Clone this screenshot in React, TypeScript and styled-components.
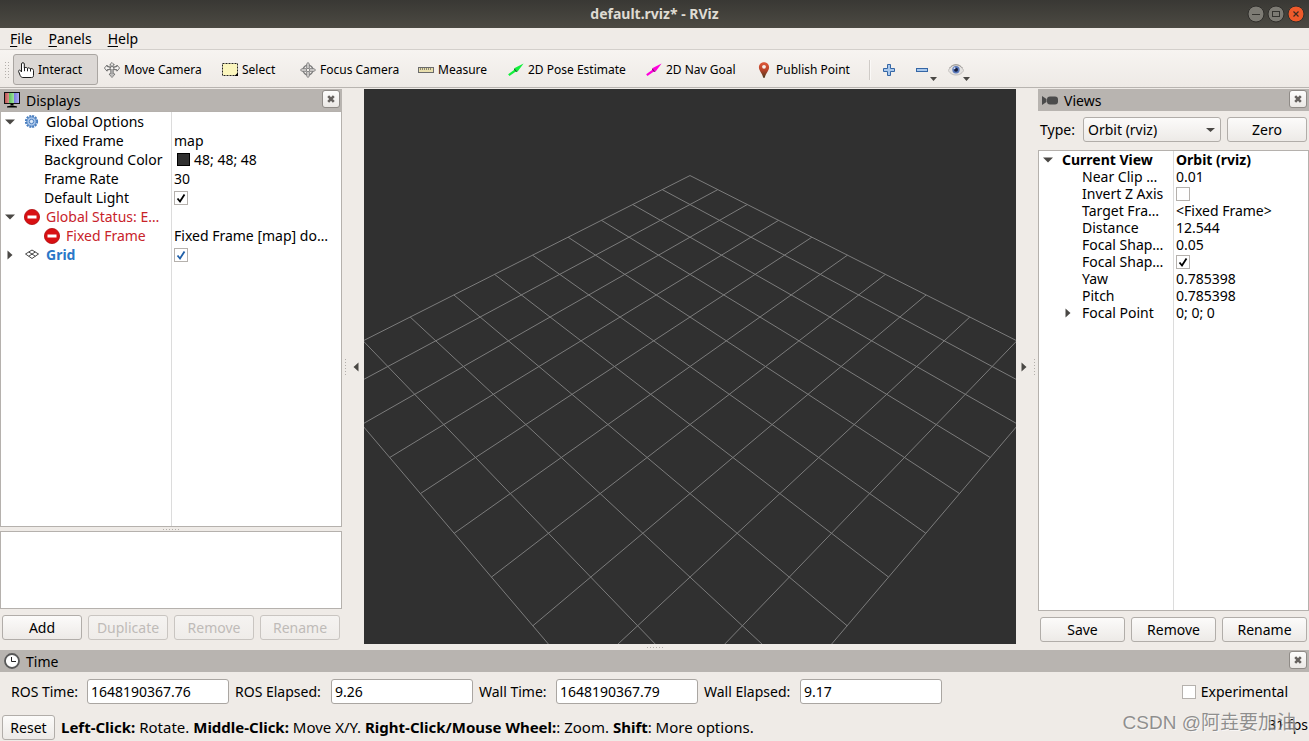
import React from "react";
import styled, { createGlobalStyle } from "styled-components";

const GlobalStyle = createGlobalStyle`
  *, *::before, *::after { box-sizing: border-box; }
  html, body { margin: 0; padding: 0; height: 100%; }
  body { overflow: hidden; }
  #root { height: 100%; }
  body, button, input, select {
    font-family: "Noto Sans", "Open Sans", "Noto Sans CJK SC", sans-serif;
    font-size: 14px;
    color: #000;
  }
`;

/* ---------- window ---------- */

const Window = styled.div`
  display: flex;
  flex-direction: column;
  height: 100vh;
  background: #efebe7;
`;

const TitleBar = styled.header`
  position: relative;
  display: flex;
  align-items: center;
  justify-content: center;
  height: 28px;
  flex: none;
  background: linear-gradient(#393834, #4c4a43);
`;

const Title = styled.h1`
  margin: 0;
  font-size: 14px;
  line-height: 28px;
  font-weight: 700;
  color: #dfdbd2;
`;

const WindowButtons = styled.div`
  position: absolute;
  top: 5px;
  right: 4px;
  display: flex;
  gap: 2px;
`;

const WindowButton = styled.button`
  width: 18px;
  height: 18px;
  padding: 0;
  border: 0;
  background: none;
  svg { display: block; }
`;

const MenuBar = styled.nav`
  display: flex;
  flex: none;
  height: 22px;
  padding-left: 5px;
  gap: 6px;
  border-bottom: 1px solid #d3cfcb;
`;

const MenuItem = styled.button`
  padding: 0 5px;
  border: 0;
  background: none;
  line-height: 21px;
  span { text-decoration: underline; text-underline-offset: 2px; text-decoration-thickness: 1px; }
`;

const ToolBar = styled.div`
  display: flex;
  flex: none;
  align-items: center;
  gap: 1px;
  height: 38px;
  padding: 2px 0 0 5px;
  margin-bottom: 1px;
  background: linear-gradient(#f7f4f1, #eeeae6);
  border-bottom: 1px solid #b8b4b0;
`;

const ToolBarHandle = styled.span`
  display: flex;
  flex: none;
  gap: 2px;
  width: 7px;
`;

const ToolButton = styled.button<{ $width: number; $active?: boolean }>`
  display: flex;
  align-items: center;
  gap: 4px;
  flex: none;
  width: ${(p) => p.$width}px;
  height: 31px;
  padding: 0 0 0 ${(p) => (p.$active ? 4 : 5)}px;
  border: ${(p) => (p.$active ? "1px solid #aaa6a2" : "0")};
  border-radius: 3px;
  background: ${(p) => (p.$active ? "#dcd8d5" : "none")};
  font-size: 12px;
  white-space: nowrap;
  svg { flex: none; }
`;

const ToolSeparator = styled.span`
  width: 2px;
  height: 20px;
  margin: 0 7px 0 5px;
  border-left: 1px solid #cfcbc7;
  border-right: 1px solid #fbf9f7;
`;

const IconButton = styled.button<{ $width: number }>`
  position: relative;
  width: ${(p) => p.$width}px;
  height: 31px;
  padding: 0 0 0 3px;
  border: 0;
  background: none;
  text-align: left;
  svg { display: block; }
`;

const MenuMark = styled.span`
  position: absolute;
  right: 7px;
  bottom: 4px;
`;

/* ---------- docks ---------- */

const Main = styled.main`
  display: grid;
  grid-template-columns: 342px 22px minmax(0, 1fr) 22px 271px;
  flex: 1;
  min-height: 0;
`;

const Dock = styled.section`
  display: flex;
  flex-direction: column;
  min-height: 0;
`;

const DockHeader = styled.div`
  display: flex;
  align-items: center;
  flex: none;
  gap: 6px;
  height: 22px;
  padding: 0 2px 0 4px;
  background: #b8b4b0;
  h2 { flex: 1; margin: 0; padding-top: 2px; font-size: 14px; line-height: 20px; font-weight: 400; }
  svg { display: block; }
`;

const CloseButton = styled.button`
  display: flex;
  align-items: center;
  justify-content: center;
  width: 18px;
  height: 18px;
  margin-bottom: 2px;
  padding: 0;
  border: 1px solid #8f8b87;
  border-radius: 3px;
  background: linear-gradient(#fdfdfc, #ebe8e5);
`;

const TreeBox = styled.div<{ $split: number }>`
  flex: 1;
  min-height: 0;
  border: 1px solid #b5b1ad;
  background: linear-gradient(#dcdcdc, #dcdcdc) ${(p) => p.$split}px 0 / 1px 100% no-repeat #fff;
`;

const Tree = styled.table<{ $row: number; $split: number }>`
  width: 100%;
  table-layout: fixed;
  border-collapse: collapse;
  td {
    height: ${(p) => p.$row}px;
    padding: 0 0 0 2px;
    line-height: ${(p) => p.$row}px;
    white-space: nowrap;
  }
  td:first-child { width: ${(p) => p.$split}px; padding: 0; }
`;

const Name = styled.div<{ $level: number; $tone?: string; $bold?: boolean }>`
  display: flex;
  align-items: center;
  padding-left: ${(p) => p.$level * 20}px;
  color: ${(p) => p.$tone ?? "#000"};
  font-weight: ${(p) => (p.$bold ? 700 : 400)};
  svg { flex: none; display: block; }
`;

const Branch = styled.span`
  flex: none;
  width: 23px;
  padding-left: 4px;
`;

const NameText = styled.span<{ $icon?: boolean }>`
  margin-left: ${(p) => (p.$icon ? 6 : 0)}px;
`;

const Value = styled.div<{ $bold?: boolean }>`
  display: flex;
  align-items: center;
  gap: 4px;
  font-weight: ${(p) => (p.$bold ? 700 : 400)};
`;

const Swatch = styled.i`
  width: 13px;
  height: 13px;
  margin-left: 3px;
  border: 1px solid #000;
  background: #303030;
`;

const CheckWrap = styled.span`
  position: relative;
  display: block;
  width: 14px;
  height: 14px;
  svg { position: absolute; left: 0; top: 0; pointer-events: none; }
`;

const CheckInput = styled.input`
  appearance: none;
  display: block;
  width: 14px;
  height: 14px;
  margin: 0;
  border: 1px solid #b5b1ad;
  background: #fff;
`;

const Description = styled.div`
  flex: none;
  height: 78px;
  border: 1px solid #b5b1ad;
  background: #fff;
`;

const ButtonRow = styled.div<{ $bottom: number }>`
  display: flex;
  flex: none;
  gap: 6px;
  padding: 6px 2px ${(p) => p.$bottom}px;
`;

const PushButton = styled.button<{ $width?: number }>`
  flex: ${(p) => (p.$width ? "none" : "1 1 0")};
  width: ${(p) => (p.$width ? `${p.$width}px` : "auto")};
  height: 25px;
  padding: 0;
  border: 1px solid #b1ada9;
  border-radius: 3px;
  background: linear-gradient(#fcfbfa, #edeae7);
  line-height: 23px;
  &:disabled { color: #bfbbb8; border-color: #c9c5c1; background: linear-gradient(#f5f3f1, #efece9); }
`;

const HandleDots = styled.span<{ $vertical?: boolean }>`
  display: block;
  width: ${(p) => (p.$vertical ? 1 : 16)}px;
  height: ${(p) => (p.$vertical ? 16 : 1)}px;
  background: repeating-linear-gradient(${(p) => (p.$vertical ? "180deg" : "90deg")}, #b3afab 0 1px, transparent 1px 3px);
`;

const Splitter = styled.div<{ $height: number }>`
  display: flex;
  flex: none;
  justify-content: center;
  align-items: center;
  height: ${(p) => p.$height}px;
`;

const Gutter = styled.div`
  display: flex;
  align-items: center;
  justify-content: space-between;
  padding: 0 3px;
`;

const Collapse = styled.button`
  display: flex;
  justify-content: center;
  align-items: center;
  width: 10px;
  height: 40px;
  padding: 0;
  border: 0;
  background: none;
`;

const Viewport = styled.div`
  min-width: 0;
  min-height: 0;
  background: #303030;
  overflow: hidden;
  svg { display: block; width: 100%; height: 100%; }
`;

const TypeRow = styled.div`
  display: flex;
  flex: none;
  align-items: center;
  gap: 6px;
  padding: 6px 2px 8px;
  label { width: 37px; }
`;

const SelectWrap = styled.div`
  position: relative;
  flex: 1;
  svg { position: absolute; right: 6px; top: 11px; pointer-events: none; }
`;

const Select = styled.select`
  appearance: none;
  display: block;
  width: 100%;
  height: 25px;
  padding: 0 20px 0 4px;
  border: 1px solid #b1ada9;
  border-radius: 3px;
  background: linear-gradient(#fcfbfa, #edeae7);
`;

/* ---------- time and status ---------- */

const TimeRow = styled.div`
  display: flex;
  flex: none;
  align-items: center;
  gap: 6px;
  padding: 7px 21px 11px 11px;
`;

const FieldLabel = styled.label<{ $width: number }>`
  flex: none;
  width: ${(p) => p.$width}px;
  white-space: nowrap;
`;

const Field = styled.input`
  width: 142px;
  height: 25px;
  padding: 0 3px;
  border: 1px solid #aaa6a2;
  border-radius: 3px;
  background: #fff;
`;

const Experimental = styled.label`
  display: flex;
  align-items: center;
  gap: 5px;
  margin-left: auto;
`;

const StatusBar = styled.footer`
  position: relative;
  display: flex;
  flex: none;
  align-items: center;
  gap: 6px;
  height: 26px;
  padding: 0 1px 2px 2px;
  p { flex: 1; margin: 0; font-size: 15px; line-height: 24px; white-space: nowrap; }
`;

const Fps = styled.span`
  padding-bottom: 4px;
  line-height: 20px;
`;

const Watermark = styled.span`
  position: absolute;
  right: 13px;
  bottom: 4px;
  font-family: "Liberation Sans", "Noto Sans CJK SC", sans-serif;
  font-size: 19px;
  line-height: 28px;
  color: rgba(110, 110, 110, 0.75);
  text-shadow: 1px 1px rgba(255, 255, 255, 0.6);
  white-space: nowrap;
`;

/* ---------- icons ---------- */

const Triangle = ({ dir }: { dir: "down" | "right" | "left" }) => (
  <svg width="10" height="10" viewBox="0 0 10 10" fill="#4a4845">
    {dir === "down" && <path d="M0 2.5h10L5 7.5z" />}
    {dir === "right" && <path d="M2.5 0.5v9l5-4.5z" />}
    {dir === "left" && <path d="M7.5 0.5v9l-5-4.5z" />}
  </svg>
);

const SmallDown = ({ width = 7 }: { width?: number }) => (
  <svg width={width} height="4" viewBox="0 0 7 4" preserveAspectRatio="none">
    <path d="M0 0h7L3.5 4z" fill="#4a4845" />
  </svg>
);

const CrossIcon = () => (
  <svg width="8" height="8" viewBox="0 0 8 8">
    <path d="M1.2 1.2l5.6 5.6M6.8 1.2L1.2 6.8" stroke="#66625f" strokeWidth="2.6" />
  </svg>
);

const HandIcon = () => (
  <svg width="16" height="16" viewBox="0 0 16 16">
    <path
      d="M3.5 10V2C3.5 .2 6.300 .2 6.300 2V6C7 5.200 8.800 5.200 9.300 6.300C10 5.600 11.800 5.700 12.200 6.800C13.200 6.200 15.500 6.500 15.500 8.500V13.500C15.500 15 14.800 15.500 13.500 15.500H4.800C3.500 15.500 2.800 14.800 2.200 13.500L.6 9.500C.2 8 2 7.600 2.700 8.800z"
      fill="#fff"
      stroke="#1c1c1c"
    />
    <path d="M6.500 5v4.200M9.500 6.300v3M12.500 6.800v2.700" stroke="#1c1c1c" fill="none" />
  </svg>
);

const MoveCameraIcon = () => (
  <svg width="16" height="16" viewBox="0 0 16 16" fill="#f6f4f2" stroke="#6a6a6a" strokeWidth="0.9">
    <path d="M8 .5L10.300 2.800H9V5.500L13 4.500V3.200L15.600 6 13 9.200V7.800L9.200 7.500V12H11L8 15.500 5 12H6.800V7.500L3 7.800V9.200L.4 6 3 3.200V4.500L7 5.500V2.800H5.700z" />
    <path d="M2.500 8.500L13.500 3.500M2.500 3.500L13.500 8.500" fill="none" strokeWidth=".8" />
    <circle cx="8" cy="6.300" r="1.800" />
    <path d="M8 9v5" fill="none" strokeWidth=".8" />
  </svg>
);

const FocusIcon = () => (
  <svg width="16" height="16" viewBox="0 0 16 16" fill="none" stroke="#7a7a7a">
    <circle cx="8" cy="8" r="4.900" strokeWidth="1.300" />
    <circle cx="8" cy="8" r="2.500" strokeWidth="1" />
    <path d="M8 .4l1.300 1.600v3.500L8 7 6.700 5.500V2zM8 15.600l1.300-1.600v-3.500L8 9l-1.300 1.500V14zM.4 8L2 6.700h3.500L7 8 5.500 9.300H2zM15.600 8L14 6.700h-3.500L9 8l1.500 1.300H14z" fill="#d6d4d2" strokeWidth="0.9" />
  </svg>
);

const SelectIcon = () => (
  <svg width="16" height="16" viewBox="0 0 16 16">
    <rect x=".5" y="1.500" width="15" height="12" fill="#fbf6bd" stroke="#222" strokeDasharray="2 1" />
    <path d="M16 10.500v3.500h-3.500z" fill="#000" />
  </svg>
);

const RulerIcon = () => (
  <svg width="16" height="16" viewBox="0 0 16 16">
    <rect x=".5" y="5.500" width="15" height="5" fill="#e9dfae" stroke="#6b6b6b" />
    <path d="M2.500 6v2M4.500 6v2M6.500 6v2M8.500 6v2M10.500 6v2M12.500 6v2" stroke="#8b8770" />
  </svg>
);

const ArrowIcon = ({ color, shade }: { color: string; shade: string }) => (
  <svg width="16" height="16" viewBox="0 0 16 16">
    <path d="M.8 13.200L8 8" stroke={color} strokeWidth="2.200" />
    <path d="M15.600 1.400L6.200 6.200 9.600 9.600z" fill={color} />
    <path d="M6.200 6.200L9.600 9.600 8 10 6 7.600z" fill={shade} />
  </svg>
);

const PinIcon = () => (
  <svg width="16" height="16" viewBox="0 0 16 16">
    <defs>
      <linearGradient id="pin" x1="0" y1="0" x2="0" y2="1">
        <stop offset="0" stopColor="#e0593a" />
        <stop offset=".5" stopColor="#b8432a" />
        <stop offset="1" stopColor="#4c3a1c" />
      </linearGradient>
    </defs>
    <path d="M8 .2c3 0 5.100 2.200 5.100 5 0 3.400-3.600 6.200-4.300 10.600H7.200C6.500 11.400 2.900 8.600 2.900 5.200c0-2.800 2.100-5 5.100-5z" fill="url(#pin)" />
    <circle cx="8" cy="4.800" r="1.900" fill="#f6f0ec" />
  </svg>
);

const PlusIcon = () => (
  <svg width="14" height="14" viewBox="0 0 14 14">
    <path d="M5.500 1.500h3v4h4v3h-4v4h-3v-4h-4v-3h4z" fill="#a9c8ec" stroke="#3566a5" />
  </svg>
);

const MinusIcon = () => (
  <svg width="14" height="14" viewBox="0 0 14 14">
    <rect x="1.500" y="5.500" width="11" height="3" fill="#a9c8ec" stroke="#3566a5" />
  </svg>
);

const EyeIcon = () => (
  <svg width="16" height="16" viewBox="0 0 16 16">
    <path d="M.3 8.500C2.500 4.500 5 3 8 3s5.500 1.500 7.700 5.500C13.500 12 11 13 8 13S2.500 12 .3 8.500z" fill="#e4e2e0" stroke="#b6b3b0" strokeWidth=".8" />
    <circle cx="8" cy="7.800" r="3.700" fill="#5b79bb" />
    <circle cx="8" cy="7.800" r="2" fill="#141c3c" />
    <circle cx="6.500" cy="6.300" r="1" fill="#cfdcf5" />
    <path d="M1.500 6C3.500 3.600 5.500 2.700 8 2.700s4.500.9 6.500 3.300" fill="none" stroke="#9b9895" />
  </svg>
);

const MonitorIcon = () => (
  <svg width="16" height="16" viewBox="0 0 16 16">
    <defs>
      <linearGradient id="screen" x1="0" y1="0" x2="1" y2="0">
        <stop offset="0" stopColor="#b84a4a" />
        <stop offset=".33" stopColor="#dd9a94" />
        <stop offset=".33" stopColor="#62c262" />
        <stop offset=".66" stopColor="#a6e6a6" />
        <stop offset=".66" stopColor="#7c7ce0" />
        <stop offset="1" stopColor="#b4b4f2" />
      </linearGradient>
    </defs>
    <rect x=".5" y=".5" width="15" height="11" fill="url(#screen)" stroke="#111" />
    <path d="M6.500 12h3v1.500h-3z" />
    <path d="M3 14.500c1-1 9-1 10 0v1H3z" />
  </svg>
);

const CameraIcon = () => (
  <svg width="16" height="16" viewBox="0 0 16 16" fill="#4b4b4b">
    <path d="M0 4l4.500 3v3L0 13z" />
    <rect x="5" y="4.500" width="11" height="8" rx="3" />
  </svg>
);

const ClockIcon = () => (
  <svg width="16" height="16" viewBox="0 0 16 16">
    <circle cx="8" cy="8" r="7" fill="#fff" stroke="#585858" strokeWidth="1.800" />
    <path d="M7.500 4v4.500H12" fill="none" stroke="#222" />
  </svg>
);

const GearIcon = () => (
  <svg width="16" height="16" viewBox="0 0 16 16">
    <circle cx="7.500" cy="7.500" r="5.600" fill="none" stroke="#4a7fc0" strokeWidth="2" strokeDasharray="2 0.930" />
    <circle cx="7.500" cy="7.500" r="4.700" fill="#a9c5ea" stroke="#4a7fc0" />
    <circle cx="7.500" cy="7.500" r="2.200" fill="#dce9f8" stroke="#4a7fc0" />
  </svg>
);

const ErrorIcon = () => (
  <svg width="16" height="16" viewBox="0 0 16 16">
    <circle cx="8" cy="8" r="7.600" fill="#d80f12" stroke="#b00a0c" strokeWidth=".8" />
    <rect x="3.500" y="6.500" width="9" height="3" fill="#fff" />
  </svg>
);

const GridIcon = () => (
  <svg width="16" height="16" viewBox="0 0 16 16" fill="none" stroke="#333" strokeWidth=".9">
    <path d="M8 3l6.500 4L8 11.500 1.500 7zM4.800 5l6.500 4.200M11.200 5L4.800 9.200" />
  </svg>
);

/* ---------- parts ---------- */

function Check({ checked, tone = "#000", label, id }: { checked?: boolean; tone?: string; label?: string; id?: string }) {
  return (
    <CheckWrap>
      <CheckInput type="checkbox" id={id} aria-label={label} defaultChecked={checked} />
      {checked && (
        <svg width="14" height="14" viewBox="0 0 14 14">
          <path d="M3.500 7.500l2.500 3 4.500-7" fill="none" stroke={tone} strokeWidth="1.800" />
        </svg>
      )}
    </CheckWrap>
  );
}

function CloseDock({ name }: { name: string }) {
  return (
    <CloseButton aria-label={`Close ${name}`}>
      <CrossIcon />
    </CloseButton>
  );
}

type Row = {
  name: string;
  level: number;
  arrow?: "down" | "right";
  icon?: React.ReactNode;
  tone?: string;
  bold?: boolean;
  valueBold?: boolean;
  value?: string;
  swatch?: boolean;
  check?: boolean;
  checkTone?: string;
};

const displayRows: Row[] = [
  { name: "Global Options", level: 0, arrow: "down", icon: <GearIcon /> },
  { name: "Fixed Frame", level: 1, value: "map" },
  { name: "Background Color", level: 1, value: "48; 48; 48", swatch: true },
  { name: "Frame Rate", level: 1, value: "30" },
  { name: "Default Light", level: 1, check: true },
  { name: "Global Status: E…", level: 0, arrow: "down", icon: <ErrorIcon />, tone: "#c8232a" },
  { name: "Fixed Frame", level: 1, icon: <ErrorIcon />, tone: "#c8232a", value: "Fixed Frame [map] do…" },
  { name: "Grid", level: 0, arrow: "right", icon: <GridIcon />, tone: "#2a78c8", bold: true, check: true, checkTone: "#1f5fa8" },
];

const viewRows: Row[] = [
  { name: "Current View", level: 0, arrow: "down", bold: true, value: "Orbit (rviz)", valueBold: true },
  { name: "Near Clip …", level: 1, value: "0.01" },
  { name: "Invert Z Axis", level: 1, check: false },
  { name: "Target Fra…", level: 1, value: "<Fixed Frame>" },
  { name: "Distance", level: 1, value: "12.544" },
  { name: "Focal Shap…", level: 1, value: "0.05" },
  { name: "Focal Shap…", level: 1, check: true },
  { name: "Yaw", level: 1, value: "0.785398" },
  { name: "Pitch", level: 1, value: "0.785398" },
  { name: "Focal Point", level: 1, arrow: "right", value: "0; 0; 0" },
];

function PropertyTree({ rows, row, split }: { rows: Row[]; row: number; split: number }) {
  return (
    <TreeBox $split={split}>
      <Tree $row={row} $split={split + 1}>
        <tbody>
          {rows.map((r, i) => (
            <tr key={i}>
              <td>
                <Name $level={r.level} $tone={r.tone} $bold={r.bold}>
                  <Branch>{r.arrow && <Triangle dir={r.arrow} />}</Branch>
                  {r.icon}
                  <NameText $icon={!!r.icon}>{r.name}</NameText>
                </Name>
              </td>
              <td>
                <Value $bold={r.valueBold}>
                  {r.swatch && <Swatch />}
                  {r.check !== undefined && <Check checked={r.check} tone={r.checkTone} label={r.name} />}
                  {r.value && <span>{r.value}</span>}
                </Value>
              </td>
            </tr>
          ))}
        </tbody>
      </Tree>
    </TreeBox>
  );
}

const DISTANCE = 12.544;
const FOCAL = 670;

/* Orbit camera at 45 degrees of yaw and pitch looking at the grid's centre. */
function project(i: number, j: number): [number, number] {
  const up = (i + j) / 2;
  const depth = DISTANCE + up;
  return [(FOCAL * (i - j)) / Math.SQRT2 / depth, (-FOCAL * up) / depth];
}

function GridScene() {
  const cells = Array.from({ length: 11 }, (_, n) => n - 5);
  const d = cells
    .flatMap((n) => [
      [project(n, -5), project(n, 5)],
      [project(-5, n), project(5, n)],
    ])
    .map(([a, b]) => `M${a[0].toFixed(2)} ${a[1].toFixed(2)}L${b[0].toFixed(2)} ${b[1].toFixed(2)}`)
    .join("");
  return (
    <svg viewBox="-326 -277.5 652 555" preserveAspectRatio="xMidYMid slice" role="img" aria-label="Grid">
      <path d={d} fill="none" stroke="#7c7c7c" strokeWidth="1" vectorEffect="non-scaling-stroke" />
    </svg>
  );
}

const tools = [
  { label: "Interact", width: 85, icon: <HandIcon />, active: true },
  { label: "Move Camera", width: 117, icon: <MoveCameraIcon /> },
  { label: "Select", width: 77, icon: <SelectIcon /> },
  { label: "Focus Camera", width: 117, icon: <FocusIcon /> },
  { label: "Measure", width: 89, icon: <RulerIcon /> },
  { label: "2D Pose Estimate", width: 137, icon: <ArrowIcon color="#12f03c" shade="#0a7a20" /> },
  { label: "2D Nav Goal", width: 109, icon: <ArrowIcon color="#ff00dc" shade="#8a0a78" /> },
  { label: "Publish Point", width: 112, icon: <PinIcon /> },
];

const times = [
  { id: "ros-time", label: "ROS Time:", width: 70, value: "1648190367.76" },
  { id: "ros-elapsed", label: "ROS Elapsed:", width: 90, value: "9.26" },
  { id: "wall-time", label: "Wall Time:", width: 71, value: "1648190367.79" },
  { id: "wall-elapsed", label: "Wall Elapsed:", width: 90, value: "9.17" },
];

export default function App() {
  return (
    <Window>
      <GlobalStyle />
      <TitleBar>
        <Title>default.rviz* - RViz</Title>
        <WindowButtons>
          <WindowButton aria-label="Minimize">
            <svg width="18" height="18" viewBox="0 0 18 18">
              <circle cx="9" cy="9" r="8" fill="#7d7b74" stroke="#2f2e2b" />
              <path d="M5 9.500h8" stroke="#34332f" />
            </svg>
          </WindowButton>
          <WindowButton aria-label="Maximize">
            <svg width="18" height="18" viewBox="0 0 18 18">
              <circle cx="9" cy="9" r="8" fill="#7d7b74" stroke="#2f2e2b" />
              <rect x="5.500" y="6.500" width="7" height="5" fill="none" stroke="#34332f" />
            </svg>
          </WindowButton>
          <WindowButton aria-label="Close">
            <svg width="18" height="18" viewBox="0 0 18 18">
              <circle cx="9" cy="9" r="8" fill="#ee5a2b" stroke="#2f2e2b" />
              <path d="M6.500 6.500l5 5M11.500 6.500l-5 5" stroke="#3b2a20" strokeWidth="1.200" />
            </svg>
          </WindowButton>
        </WindowButtons>
      </TitleBar>

      <MenuBar>
        <MenuItem><span>F</span>ile</MenuItem>
        <MenuItem><span>P</span>anels</MenuItem>
        <MenuItem><span>H</span>elp</MenuItem>
      </MenuBar>

      <ToolBar>
        <ToolBarHandle>
          <HandleDots $vertical />
          <HandleDots $vertical />
        </ToolBarHandle>
        {tools.map((t) => (
          <ToolButton key={t.label} $width={t.width} $active={t.active}>
            {t.icon}
            {t.label}
          </ToolButton>
        ))}
        <ToolSeparator />
        <IconButton $width={32} aria-label="Add tool"><PlusIcon /></IconButton>
        <IconButton $width={32} aria-label="Remove tool">
          <MinusIcon />
          <MenuMark><SmallDown /></MenuMark>
        </IconButton>
        <IconButton $width={32} aria-label="Tool visibility">
          <EyeIcon />
          <MenuMark><SmallDown /></MenuMark>
        </IconButton>
      </ToolBar>

      <Main>
        <Dock>
          <DockHeader>
            <MonitorIcon />
            <h2>Displays</h2>
            <CloseDock name="Displays" />
          </DockHeader>
          <PropertyTree rows={displayRows} row={19} split={170} />
          <Splitter $height={4}><HandleDots /></Splitter>
          <Description />
          <ButtonRow $bottom={4}>
            <PushButton>Add</PushButton>
            <PushButton disabled>Duplicate</PushButton>
            <PushButton disabled>Remove</PushButton>
            <PushButton disabled>Rename</PushButton>
          </ButtonRow>
        </Dock>
        <Gutter>
          <HandleDots $vertical />
          <Collapse aria-label="Hide left panel"><Triangle dir="left" /></Collapse>
        </Gutter>
        <Viewport><GridScene /></Viewport>
        <Gutter>
          <Collapse aria-label="Hide right panel"><Triangle dir="right" /></Collapse>
          <HandleDots $vertical />
        </Gutter>
        <Dock>
          <DockHeader>
            <CameraIcon />
            <h2>Views</h2>
            <CloseDock name="Views" />
          </DockHeader>
          <TypeRow>
            <label htmlFor="view-type">Type:</label>
            <SelectWrap>
              <Select id="view-type" defaultValue="orbit">
                <option value="orbit">Orbit (rviz)</option>
              </Select>
              <SmallDown width={9} />
            </SelectWrap>
            <PushButton $width={80}>Zero</PushButton>
          </TypeRow>
          <PropertyTree rows={viewRows} row={17} split={134} />
          <ButtonRow $bottom={2}>
            <PushButton>Save</PushButton>
            <PushButton>Remove</PushButton>
            <PushButton>Rename</PushButton>
          </ButtonRow>
        </Dock>
      </Main>
      <Splitter $height={6}><HandleDots /></Splitter>

      <DockHeader>
        <ClockIcon />
        <h2>Time</h2>
        <CloseDock name="Time" />
      </DockHeader>
      <TimeRow>
        {times.map((t) => (
          <React.Fragment key={t.id}>
            <FieldLabel htmlFor={t.id} $width={t.width}>{t.label}</FieldLabel>
            <Field id={t.id} defaultValue={t.value} />
          </React.Fragment>
        ))}
        <Experimental htmlFor="experimental">
          <Check id="experimental" />
          Experimental
        </Experimental>
      </TimeRow>

      <StatusBar>
        <PushButton $width={53}>Reset</PushButton>
        <p>
          <b>Left-Click:</b> Rotate. <b>Middle-Click:</b> Move X/Y. <b>Right-Click/Mouse Wheel:</b>: Zoom. <b>Shift</b>: More options.
        </p>
        <Fps>31 fps</Fps>
        <Watermark>CSDN @阿垚要加油</Watermark>
      </StatusBar>
    </Window>
  );
}
